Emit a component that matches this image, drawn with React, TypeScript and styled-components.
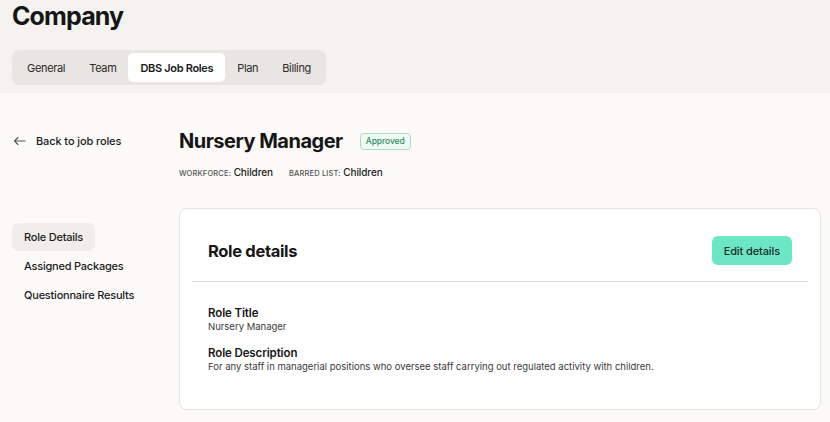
import React from "react";
import styled, { createGlobalStyle } from "styled-components";

const GlobalStyle = createGlobalStyle`
  html, body {
    margin: 0;
    padding: 0;
    background: #fbfaf8;
    font-family: Inter, "Noto Sans", sans-serif;
    color: #1c1c1c;
    -webkit-font-smoothing: antialiased;
  }
`;

const TABS = ["General", "Team", "DBS Job Roles", "Plan", "Billing"];
const NAV = ["Role Details", "Assigned Packages", "Questionnaire Results"];

export default function App() {
  return (
    <>
      <GlobalStyle />
      <Header>
        <PageTitle>Company</PageTitle>
        <TabBar>
          {TABS.map((t) => (
            <Tab key={t} $active={t === "DBS Job Roles"}>
              {t}
            </Tab>
          ))}
        </TabBar>
      </Header>
      <Main>
        <BackLink>
          <svg width="13" height="10" viewBox="0 0 13 10" fill="none">
            <path
              d="M12 5H1.5M5 1.5L1.5 5L5 8.5"
              stroke="#555"
              strokeWidth="1.1"
              strokeLinecap="round"
              strokeLinejoin="round"
            />
          </svg>
          Back to job roles
        </BackLink>
        <TitleBlock>
          <TitleRow>
            <RoleName>Nursery Manager</RoleName>
            <Badge>Approved</Badge>
          </TitleRow>
          <MetaRow>
            <Meta>
              <MetaLabel>Workforce:</MetaLabel> Children
            </Meta>
            <Meta>
              <MetaLabel>Barred list:</MetaLabel> Children
            </Meta>
          </MetaRow>
        </TitleBlock>
        <SideNav>
          {NAV.map((n) => (
            <NavItem key={n} $active={n === "Role Details"}>
              {n}
            </NavItem>
          ))}
        </SideNav>
        <Card>
          <CardHeader>
            <CardTitle>Role details</CardTitle>
            <EditButton>Edit details</EditButton>
          </CardHeader>
          <Divider />
          <CardBody>
            <Field>
              <FieldLabel>Role Title</FieldLabel>
              <FieldValue>Nursery Manager</FieldValue>
            </Field>
            <Field>
              <FieldLabel>Role Description</FieldLabel>
              <FieldValue>
                For any staff in managerial positions who oversee staff carrying
                out regulated activity with children.
              </FieldValue>
            </Field>
          </CardBody>
        </Card>
      </Main>
    </>
  );
}

const Header = styled.header`
  background: #f5f3f0;
  padding: 0 12px 8px;
  height: 93px;
  box-sizing: border-box;
`;

const PageTitle = styled.h1`
  margin: 0;
  font-size: 25px;
  line-height: 32px;
  font-weight: 700;
  letter-spacing: -0.035em;
  color: #161616;
`;

const TabBar = styled.nav`
  display: inline-flex;
  align-items: center;
  margin-top: 18px;
  padding: 3px;
  background: #e8e5e2;
  border-radius: 7px;
  height: 35px;
  box-sizing: border-box;
`;

const Tab = styled.div<{ $active?: boolean }>`
  display: flex;
  align-items: center;
  height: 29px;
  padding: 0 12px;
  border-radius: 5px;
  font-size: 11px;
  letter-spacing: -0.03em;
  font-weight: ${(p) => (p.$active ? 600 : 400)};
  color: ${(p) => (p.$active ? "#1a1a1a" : "#2b2b2b")};
  background: ${(p) => (p.$active ? "#ffffff" : "transparent")};
`;

const Main = styled.main`
  display: grid;
  grid-template-columns: 167px 1fr;
  grid-template-rows: auto auto;
  row-gap: 29px;
  padding: 34px 9px 0 12px;
`;

const BackLink = styled.a`
  display: flex;
  align-items: center;
  gap: 10px;
  height: 28px;
  padding-left: 1px;
  font-size: 11px;
  letter-spacing: -0.01em;
  font-weight: 500;
  color: #1c1c1c;
  cursor: pointer;
`;

const TitleBlock = styled.div`
  display: flex;
  flex-direction: column;
  gap: 10px;
`;

const TitleRow = styled.div`
  display: flex;
  align-items: center;
  gap: 17px;
  height: 28px;
`;

const RoleName = styled.h2`
  margin: 0;
  font-size: 20px;
  font-weight: 700;
  letter-spacing: -0.025em;
  color: #161616;
`;

const Badge = styled.span`
  display: inline-flex;
  align-items: center;
  height: 15px;
  padding: 0 5px;
  border: 1px solid #a9dcc4;
  background: #effaf4;
  border-radius: 4px;
  font-size: 8.5px;
  font-weight: 500;
  letter-spacing: -0.01em;
  color: #2f8a61;
`;

const MetaRow = styled.div`
  display: flex;
  gap: 16px;
  height: 14px;
  align-items: center;
`;

const Meta = styled.span`
  font-size: 10px;
  font-weight: 500;
  letter-spacing: -0.01em;
  color: #1c1c1c;
`;

const MetaLabel = styled.span`
  font-size: 7.5px;
  text-transform: uppercase;
  letter-spacing: 0.02em;
  color: #555;
`;

const SideNav = styled.nav`
  display: flex;
  flex-direction: column;
  align-items: flex-start;
  gap: 1px;
  padding-top: 15px;
`;

const NavItem = styled.div<{ $active?: boolean }>`
  display: flex;
  align-items: center;
  height: 28px;
  padding: 0 12px;
  border-radius: 6px;
  font-size: 11px;
  letter-spacing: -0.02em;
  font-weight: 500;
  color: #1c1c1c;
  background: ${(p) => (p.$active ? "#f0edea" : "transparent")};
`;

const Card = styled.section`
  background: #ffffff;
  border: 1px solid #e4e4e4;
  border-radius: 8px;
  box-shadow: 0 1px 2px rgba(0, 0, 0, 0.03);
  padding-bottom: 36px;
`;

const CardHeader = styled.div`
  display: flex;
  align-items: center;
  justify-content: space-between;
  padding: 27px 28px 16px;
`;

const CardTitle = styled.h3`
  margin: 0;
  font-size: 16.5px;
  font-weight: 700;
  letter-spacing: -0.02em;
  color: #161616;
`;

const EditButton = styled.button`
  height: 29px;
  padding: 0 12px;
  border: none;
  border-radius: 6px;
  background: #6ce7c6;
  font-family: inherit;
  font-size: 11px;
  letter-spacing: -0.01em;
  font-weight: 500;
  color: #1f2b27;
  cursor: pointer;
`;

const Divider = styled.hr`
  margin: 0 12px;
  border: none;
  border-top: 1px solid #dcdcdc;
`;

const CardBody = styled.div`
  display: flex;
  flex-direction: column;
  gap: 12px;
  padding: 23px 28px 0;
`;

const Field = styled.div`
  display: flex;
  flex-direction: column;
`;

const FieldLabel = styled.div`
  font-size: 11.5px;
  line-height: 16px;
  font-weight: 600;
  letter-spacing: -0.01em;
  color: #161616;
`;

const FieldValue = styled.div`
  font-size: 9.5px;
  line-height: 12px;
  color: #3a3a3a;
`;
